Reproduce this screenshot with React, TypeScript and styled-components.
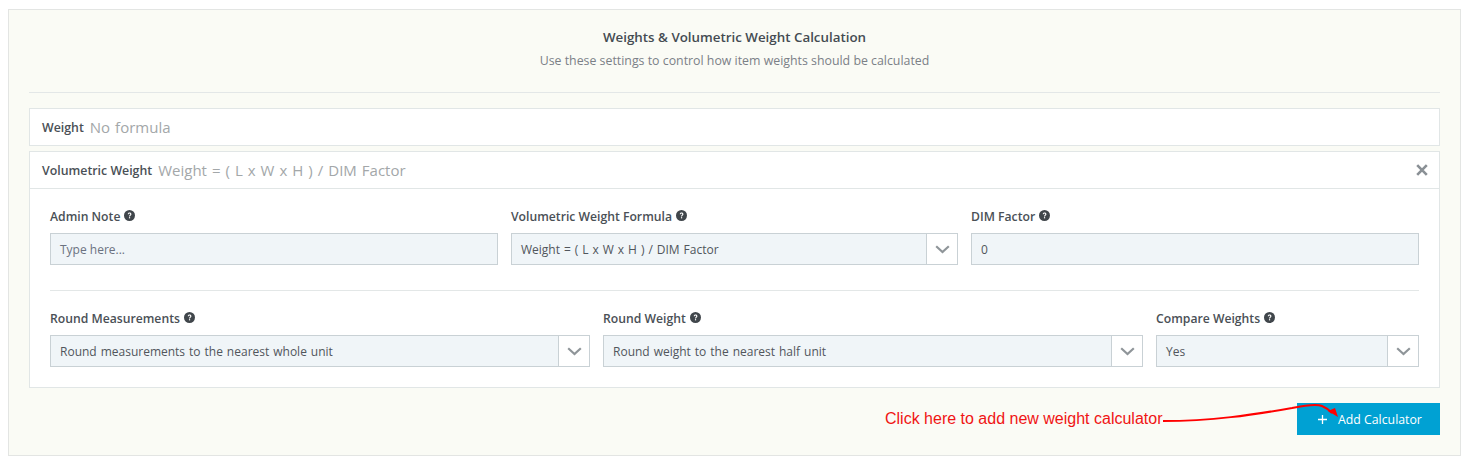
import React from "react";
import styled, { createGlobalStyle } from "styled-components";

const Global = createGlobalStyle`
  html, body { margin: 0; padding: 0; background: #fff; }
  body { font-family: "Open Sans", "Liberation Sans", sans-serif; color: #444; }
  * { box-sizing: border-box; }
`;

const Page = styled.div`
  width: 1468px;
  height: 464px;
  padding: 9px 7px 8px 8px;
`;

const Panel = styled.section`
  height: 447px;
  padding: 0 20px;
  background: #fafbf5;
  border: 1px solid #e3e5e3;
`;

const Intro = styled.header`
  height: 83px;
  padding-top: 17px;
  text-align: center;
  border-bottom: 1px solid #e3e7e7;
  margin-bottom: 15px;
`;

const Title = styled.h2`
  margin: 0;
  font-size: 13.35px;
  line-height: 20px;
  font-weight: 600;
  color: #444b52;
`;

const Subtitle = styled.p`
  margin: 4px 0 0;
  font-size: 12.35px;
  line-height: 20px;
  color: #7b8087;
`;

const Card = styled.div`
  background: #fff;
  border: 1px solid #e1e6e6;
  margin-bottom: 5px;
`;

const CardHeader = styled.div<{ $divided?: boolean }>`
  display: flex;
  align-items: center;
  height: ${(p) => (p.$divided ? "37px" : "36px")};
  padding: 0 11px 0 12px;
  ${(p) => p.$divided && "border-bottom: 1px solid #e1e6e6;"}
`;

const CardName = styled.span`
  font-size: 12.35px;
  font-weight: 600;
  color: #4a5056;
  margin-right: 6px;
`;

const Formula = styled.span`
  flex: 1;
  font-size: 15px;
  word-spacing: 1.1px;
  color: #a3a7a9;
`;

const CloseButton = styled.button`
  display: flex;
  width: 12px;
  height: 12px;
  padding: 0;
  border: 0;
  background: none;
  color: #8a9095;
`;

const CardBody = styled.div`
  padding: 18px 20px 20px;
`;

const FieldRow = styled.div<{ $columns: string }>`
  display: grid;
  grid-template-columns: ${(p) => p.$columns};
  column-gap: 13px;
`;

const Separator = styled.hr`
  margin: 25px 0 18px;
  border: 0;
  border-top: 1px solid #e3e7e7;
`;

const Label = styled.label`
  display: flex;
  align-items: center;
  gap: 4px;
  height: 18px;
  margin-bottom: 8px;
  font-size: 12.2px;
  font-weight: 600;
  color: #4a5056;
`;

const HelpIcon = styled.svg`
  width: 11px;
  height: 11px;
  margin-top: -2px;
`;

const Input = styled.div<{ $muted?: boolean }>`
  height: 32px;
  padding: 0 9px;
  display: flex;
  align-items: center;
  background: #f0f5f8;
  border: 1px solid #c9d1d5;
  font-size: 12px;
  color: ${(p) => (p.$muted ? "#6b7280" : "#51565c")};
`;

const Select = styled.div`
  display: flex;
  height: 32px;
  border: 1px solid #c9d1d5;
  background: #fff;
  font-size: 12px;
  word-spacing: 0.85px;
  color: #51565c;
`;

const SelectValue = styled.div`
  flex: 1;
  display: flex;
  align-items: center;
  padding: 0 9px;
  background: #f0f5f8;
  border-right: 1px solid #c9d1d5;
`;

const SelectCaret = styled.div`
  width: 30px;
  display: flex;
  align-items: center;
  justify-content: center;
  color: #8f9599;
`;

const Footer = styled.div`
  position: relative;
  display: flex;
  justify-content: flex-end;
  align-items: center;
  padding-top: 10px;
`;

const Hint = styled.span`
  position: absolute;
  left: 856px;
  top: 16px;
  font-family: "Liberation Sans", Arial, sans-serif;
  font-size: 16px;
  line-height: 20px;
  color: #f01414;
`;

const AddButton = styled.button`
  display: flex;
  align-items: center;
  width: 143px;
  height: 32px;
  padding: 0 0 0 20px;
  border: 0;
  background: #00a1d3;
  color: #fff;
  font-family: inherit;
  font-size: 12.3px;
`;

const Plus = styled.svg`
  width: 11px;
  height: 11px;
  margin-right: 10px;
`;

const Arrow = styled.svg`
  position: absolute;
  left: 1133px;
  top: 0;
  width: 220px;
  height: 40px;
  overflow: visible;
  pointer-events: none;
`;

const Help = () => (
  <HelpIcon viewBox="0 0 12 12" aria-hidden="true">
    <circle cx="6" cy="6" r="6" fill="#40464b" />
    <path
      d="M4.1 4.7c0-1.2.9-1.9 2-1.9s2 .7 2 1.7c0 1.5-1.5 1.4-1.5 2.6H5.4c0-1.8 1.4-1.7 1.4-2.6 0-.4-.3-.7-.8-.7-.5 0-.8.3-.8.9H4.1z"
      fill="#fff"
    />
    <rect x="5.4" y="7.8" width="1.3" height="1.3" fill="#fff" />
  </HelpIcon>
);

const Caret = () => (
  <svg width="15" height="9" viewBox="0 0 15 9" aria-hidden="true">
    <path d="M1.2 1.2 7.5 7l6.3-5.8" fill="none" stroke="currentColor" strokeWidth="2.2" />
  </svg>
);

const SelectField = ({ label, value }: { label: string; value: string }) => (
  <div>
    <Label>
      {label} <Help />
    </Label>
    <Select>
      <SelectValue>{value}</SelectValue>
      <SelectCaret>
        <Caret />
      </SelectCaret>
    </Select>
  </div>
);

const InputField = ({ label, value, muted }: { label: string; value: string; muted?: boolean }) => (
  <div>
    <Label>
      {label} <Help />
    </Label>
    <Input $muted={muted}>{value}</Input>
  </div>
);

export default function App() {
  return (
    <Page>
      <Global />
      <Panel>
        <Intro>
          <Title>Weights &amp; Volumetric Weight Calculation</Title>
          <Subtitle>Use these settings to control how item weights should be calculated</Subtitle>
        </Intro>
        <Card>
          <CardHeader>
            <CardName>Weight</CardName>
            <Formula>No formula</Formula>
          </CardHeader>
        </Card>
        <Card>
          <CardHeader $divided>
            <CardName>Volumetric Weight</CardName>
            <Formula>Weight = ( L x W x H ) / DIM Factor</Formula>
            <CloseButton aria-label="Remove">
              <svg width="12" height="12" viewBox="0 0 12 12" aria-hidden="true">
                <path d="M1.2 1.2l9.6 9.6M10.8 1.2l-9.6 9.6" stroke="currentColor" strokeWidth="2.6" />
              </svg>
            </CloseButton>
          </CardHeader>
          <CardBody>
            <FieldRow $columns="448px 447px 448px">
              <InputField label="Admin Note" value="Type here..." muted />
              <SelectField label="Volumetric Weight Formula" value="Weight = ( L x W x H ) / DIM Factor" />
              <InputField label="DIM Factor" value="0" />
            </FieldRow>
            <Separator />
            <FieldRow $columns="540px 540px 263px">
              <SelectField label="Round Measurements" value="Round measurements to the nearest whole unit" />
              <SelectField label="Round Weight" value="Round weight to the nearest half unit" />
              <SelectField label="Compare Weights" value="Yes" />
            </FieldRow>
          </CardBody>
        </Card>
        <Footer>
          <Hint>Click here to add new weight calculator</Hint>
          <AddButton>
            <Plus viewBox="0 0 11 11" aria-hidden="true">
              <path d="M5.5 1v9M1 5.5h9" stroke="#fff" strokeWidth="1.3" />
            </Plus>
            Add Calculator
          </AddButton>
          <Arrow viewBox="0 0 220 40" aria-hidden="true">
            <path
              d="M1 28C50 28 90 22 130 15C145 12 155 11 160 13C165 15 168 18 170 20"
              fill="none"
              stroke="#f00"
              strokeWidth="2"
            />
            <path d="M176 24L166 18L173 15Z" fill="#f00" />
          </Arrow>
        </Footer>
      </Panel>
    </Page>
  );
}
